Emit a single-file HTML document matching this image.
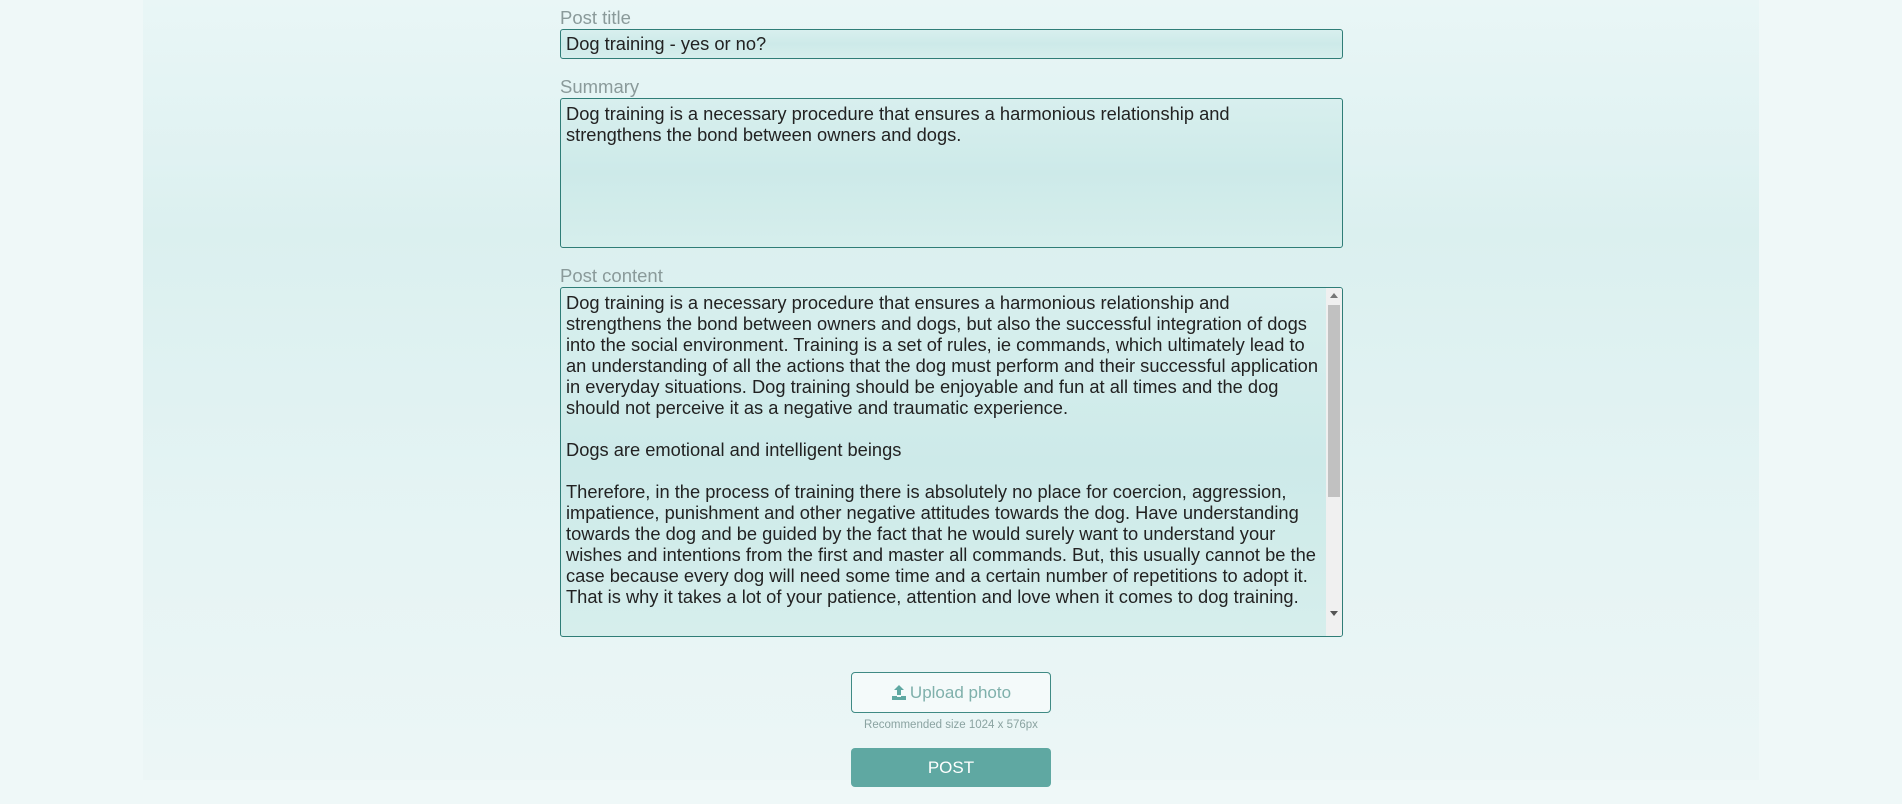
<!DOCTYPE html>
<html><head><meta charset="utf-8"><style>
html,body{margin:0;padding:0;width:1902px;height:804px;overflow:hidden;background:#eff8f8;font-family:"Liberation Sans",sans-serif;}
.panel{position:absolute;left:143px;top:0;width:1616px;height:780px;background:linear-gradient(#e9f6f6 0%,#e0f2f2 20%,#dbf0ef 30%,#e0f2f2 50%,#e6f4f4 70%,#ecf6f6 100%);}
.lbl{position:absolute;left:560px;color:#8a9a9a;font-size:18.5px;font-weight:300;}
.box{position:absolute;left:560px;width:783px;border:1.5px solid #2f7d77;border-radius:3px;background:linear-gradient(#d8efee,#cdeae9 50%,#d6eeec);color:#222;font-size:18.3px;line-height:21px;box-sizing:border-box;padding:4px 5px;}
.sb{position:absolute;right:0;top:0;bottom:0;width:16px;background:#f0f0f0;}
.thumb{position:absolute;left:2px;right:2px;top:17px;height:192px;background:#c1c1c1;}
.btn{position:absolute;left:851px;width:200px;box-sizing:border-box;border-radius:4px;text-align:center;font-size:17px;}
</style></head><body>
<div class="panel"></div>
<div class="lbl" style="top:7px">Post title</div>
<div class="box" style="top:29px;height:30px;line-height:21px;padding-top:3px">Dog training - yes or no?</div>
<div class="lbl" style="top:76px">Summary</div>
<div class="box" style="top:98px;height:150px">Dog training is a necessary procedure that ensures a harmonious relationship and<br>strengthens the bond between owners and dogs.</div>
<div class="lbl" style="top:265px">Post content</div>
<div class="box" style="top:287px;height:350px;padding-right:22px;overflow:hidden">Dog training is a necessary procedure that ensures a harmonious relationship and strengthens the bond between owners and dogs, but also the successful integration of dogs into the social environment. Training is a set of rules, ie commands, which ultimately lead to an understanding of all the actions that the dog must perform and their successful application in everyday situations. Dog training should be enjoyable and fun at all times and the dog should not perceive it as a negative and traumatic experience.<br><br>Dogs are emotional and intelligent beings<br><br>Therefore, in the process of training there is absolutely no place for coercion, aggression, impatience, punishment and other negative attitudes towards the dog. Have understanding towards the dog and be guided by the fact that he would surely want to understand your wishes and intentions from the first and master all commands. But, this usually cannot be the case because every dog will need some time and a certain number of repetitions to adopt it. That is why it takes a lot of your patience, attention and love when it comes to dog training.
<div class="sb"><div class="thumb"></div><div style="position:absolute;top:5px;left:4px;border:4px solid transparent;border-bottom:5px solid #777;border-top:0"></div><div style="position:absolute;bottom:20px;left:4px;border:4px solid transparent;border-top:5px solid #555;border-bottom:0"></div></div></div>
<div class="btn" style="top:672px;height:41px;border:1px solid #3f8a84;background:#f4fafa;color:#7fb0ab;line-height:39px"><svg width="16" height="16" viewBox="0 0 16 16" style="vertical-align:-2px;margin-right:3px"><path d="M8 1 L13 6 H10 V11 H6 V6 H3 Z" fill="#5fa8a2"/><path d="M1 12 H6 V13 H10 V12 H15 V16 H1 Z" fill="#5fa8a2"/></svg>Upload photo</div>
<div style="position:absolute;left:851px;width:200px;top:719px;text-align:center;font-size:11.5px;color:#8aa3a1">Recommended size 1024 x 576px</div>
<div class="btn" style="top:748px;height:39px;background:#5fa8a2;color:#fff;line-height:39px">POST</div>
</body></html>
